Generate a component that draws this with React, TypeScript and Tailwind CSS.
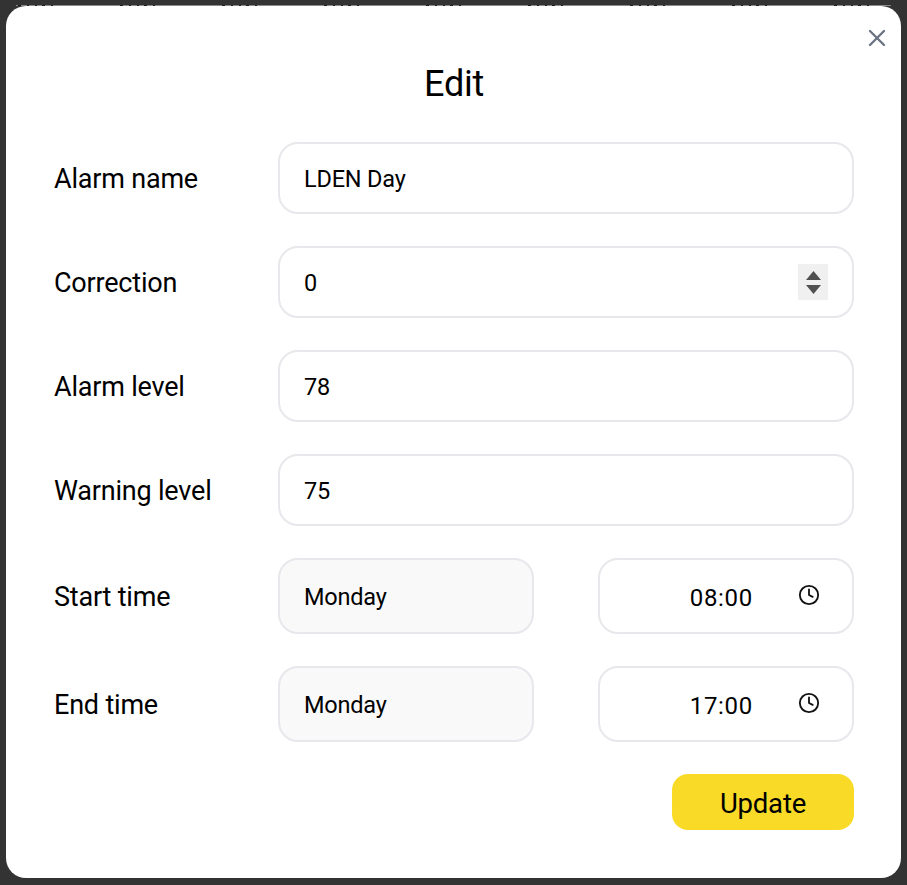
import React from 'react';
import { Clock, X } from 'lucide-react';

const font = "font-['Roboto',sans-serif]";

function Row({ label, children }: { label: string; children: React.ReactNode }) {
  return (
    <div className="flex items-center">
      <div className="w-[224px] shrink-0 pt-[2px] text-[27px] tracking-[-0.2px] text-black">{label}</div>
      <div className="flex-1 flex justify-between">{children}</div>
    </div>
  );
}

function Field({ value, stepper }: { value: string; stepper?: boolean }) {
  return (
    <div className="w-full h-[72px] pl-[24px] pr-[24px] flex items-center justify-between rounded-[20px] border-2 border-[#e7e7ec] bg-white text-[23.5px] tracking-[-0.2px] text-black">
      <span className="pt-[4px]">{value}</span>
      {stepper && (
        <div className="w-[30px] h-[36px] bg-[#f0f0f0] flex flex-col items-center justify-center gap-[5px]">
          <svg width="15" height="9" viewBox="0 0 15 9"><path d="M7.5 0 15 9H0z" fill="#505050" /></svg>
          <svg width="15" height="9" viewBox="0 0 15 9"><path d="M0 0h15L7.5 9z" fill="#505050" /></svg>
        </div>
      )}
    </div>
  );
}

function Day() {
  return (
    <div className="w-[256px] h-[76px] pl-[24px] flex items-center rounded-[20px] border-2 border-[#e7e7ec] bg-[#f9f9fa] text-[23.5px] tracking-[-0.2px] text-black">
      <span className="pt-[4px]">Monday</span>
    </div>
  );
}

function Time({ value }: { value: string }) {
  return (
    <div className="w-[256px] h-[76px] pr-[32px] flex items-center justify-end gap-[45px] rounded-[20px] border-2 border-[#e7e7ec] bg-white text-[24px] tracking-[0.7px] text-black">
      <span className="pt-[4px]">{value}</span>
      <Clock size={22} strokeWidth={2} color="#111" className="-mt-[2px]" />
    </div>
  );
}

// bottoms of the table header behind the overlay, a 1px sliver is all that shows
function HeaderSliver() {
  return (
    <div className="mt-[5px] ml-[16px] mr-[16px] h-px shrink-0 bg-[#8a8a8a] flex gap-[67px] pl-[2px]">
      {Array.from({ length: 9 }).map((_, i) => (
        <div key={i} className="w-[35px] shrink-0 flex justify-between">
          <span className="w-[3px] bg-[#1c1c1c]" />
          <span className="w-[2px] bg-[#1c1c1c]" />
          <span className="w-[2px] bg-[#1c1c1c]" />
          <span className="w-[3px] bg-[#1c1c1c]" />
          <span className="w-[2px] bg-[#1c1c1c]" />
        </div>
      ))}
    </div>
  );
}

export default function App() {
  return (
    <div className={`h-[885px] bg-[#333333] flex flex-col ${font}`}>
      <HeaderSliver />
      <div className="flex-1 pl-[6px] pr-[6px] pb-[7px] min-h-0">
        <div className="relative h-full rounded-[20px] bg-white pl-[48px] pr-[47px] pt-[48px]">
          <button className="absolute right-[10px] top-[18px] text-[#6b7280]">
            <X size={28} strokeWidth={2} />
          </button>
          <h2 className="h-[56px] text-center text-[36px] leading-[60px] tracking-[-0.3px] text-black">Edit</h2>
          <div className="mt-[32px] flex flex-col gap-[32px]">
            <Row label="Alarm name"><Field value="LDEN Day" /></Row>
            <Row label="Correction"><Field value="0" stepper /></Row>
            <Row label="Alarm level"><Field value="78" /></Row>
            <Row label="Warning level"><Field value="75" /></Row>
            <Row label="Start time"><Day /><Time value="08:00" /></Row>
            <Row label="End time"><Day /><Time value="17:00" /></Row>
            <div className="flex justify-end">
              <button className="w-[182px] h-[56px] pt-[3px] rounded-[16px] bg-[#f8da27] text-[27.5px] tracking-[-0.2px] text-black">Update</button>
            </div>
          </div>
        </div>
      </div>
    </div>
  );
}
